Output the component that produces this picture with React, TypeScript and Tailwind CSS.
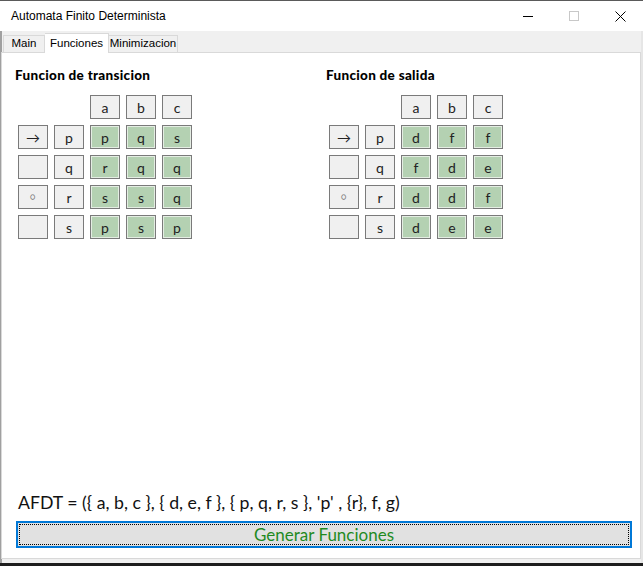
import React from 'react';

const gothic = { fontFamily: '"Lato", "Open Sans", sans-serif' };

type Row = { mark: string; state: string; out: string[] };

const transicion: Row[] = [
  { mark: '→', state: 'p', out: ['p', 'q', 's'] },
  { mark: '', state: 'q', out: ['r', 'q', 'q'] },
  { mark: '○', state: 'r', out: ['s', 's', 'q'] },
  { mark: '', state: 's', out: ['p', 's', 'p'] },
];

const salida: Row[] = [
  { mark: '→', state: 'p', out: ['d', 'f', 'f'] },
  { mark: '', state: 'q', out: ['f', 'd', 'e'] },
  { mark: '○', state: 'r', out: ['d', 'd', 'f'] },
  { mark: '', state: 's', out: ['d', 'e', 'e'] },
];

function Cell({ children, green, small }: { children?: React.ReactNode; green?: boolean; small?: boolean }) {
  return (
    <div
      className={
        'w-[30px] h-[24px] flex items-center justify-center border border-[#7a7a7a] text-[#222] ' +
        (green ? 'bg-[#b4d1b2] shadow-[inset_0_0_0_1px_#e4ede3] ' : 'bg-[#f0f0f0] ') +
        (small ? 'text-[9px] text-[#777]' : 'text-[14px]')
      }
      style={gothic}
    >
      {children}
    </div>
  );
}

function Tabla({ title, rows }: { title: string; rows: Row[] }) {
  return (
    <div className="flex flex-col">
      <h3 className="text-[13.5px] font-black text-black h-[20px] leading-[20px] tracking-[0.3px] -ml-px" style={gothic}>
        {title}
      </h3>
      <div className="grid grid-cols-[30px_30px_30px_30px_30px] gap-x-[6px] gap-y-[6px] mt-[10px] ml-[2px]">
        <div />
        <div />
        <Cell>a</Cell>
        <Cell>b</Cell>
        <Cell>c</Cell>
        {rows.map((r, i) => (
          <React.Fragment key={i}>
            <Cell small={r.mark === '○'}>{r.mark}</Cell>
            <Cell>{r.state}</Cell>
            {r.out.map((o, j) => (
              <Cell key={j} green>
                {o}
              </Cell>
            ))}
          </React.Fragment>
        ))}
      </div>
    </div>
  );
}

export default function App() {
  return (
    <div className="w-[643px] h-[566px] bg-white flex flex-col overflow-hidden" style={{ fontFamily: '"Liberation Sans", Arial, sans-serif' }}>
      <div className="h-[31px] flex items-center border-t border-[#5a5a5a] shrink-0">
        <span className="ml-[11px] text-[12px] text-black">Automata Finito Determinista</span>
        <div className="ml-auto flex items-center h-full">
          <div className="w-[46px] h-full flex items-center justify-center">
            <div className="w-[10px] h-px bg-black" />
          </div>
          <div className="w-[46px] h-full flex items-center justify-center">
            <div className="w-[10px] h-[10px] border border-[#c8c8c8]" />
          </div>
          <div className="w-[46px] h-full flex items-center justify-center">
            <svg width="11" height="11" viewBox="0 0 11 11">
              <path d="M0.5 0.5L10.5 10.5M10.5 0.5L0.5 10.5" stroke="#000" strokeWidth="1" />
            </svg>
          </div>
        </div>
      </div>
      <div className="flex-1 flex flex-col border-l-2 border-[#a0a0a0] border-r-2 border-r-[#e6e6e6] bg-[#f0f0f0]">
        <div className="h-[21px] flex items-end pl-[1px] shrink-0 text-[11.5px]">
          <div className="h-[17px] w-[42px] border border-b-0 border-[#d9d9d9] bg-[#f0f0f0] flex items-center justify-center">Main</div>
          <div className="h-[20px] w-[64px] border border-b-0 border-l-0 border-[#d9d9d9] bg-white flex items-start justify-center pt-[1px] -mb-px relative z-10">Funciones</div>
          <div className="h-[17px] w-[69px] border border-b-0 border-l-0 border-[#d9d9d9] bg-[#f0f0f0] flex items-center justify-center">Minimizacion</div>
        </div>
        <div className="flex-1 bg-white border border-[#d9d9d9] ml-[-1px] flex flex-col pl-[14px] pr-[8px] pt-[12px]">
          <div className="flex">
            <div className="w-[311px]">
              <Tabla title="Funcion de transicion" rows={transicion} />
            </div>
            <Tabla title="Funcion de salida" rows={salida} />
          </div>
          <div className="mt-auto">
            <div className="text-[17.7px] leading-[22px] text-[#111] ml-[2px] mb-[7px]" style={gothic}>
              AFDT = ({'{'} a, b, c {'}'}, {'{'} d, e, f {'}'}, {'{'} p, q, r, s {'}'}, 'p' , {'{'}r{'}'}, f, g)
            </div>
            <div className="h-[27px] border-2 border-[#0078d7] bg-[#e1e1e1] p-px mb-[10px]">
              <div className="h-full border border-dotted border-black flex items-center justify-center text-[17px] text-[#1f8a1f]" style={gothic}>
                Generar Funciones
              </div>
            </div>
          </div>
        </div>
        <div className="h-[4px] shrink-0" />
      </div>
      <div className="h-[3px] bg-[#1e1e1e] shrink-0" />
    </div>
  );
}
